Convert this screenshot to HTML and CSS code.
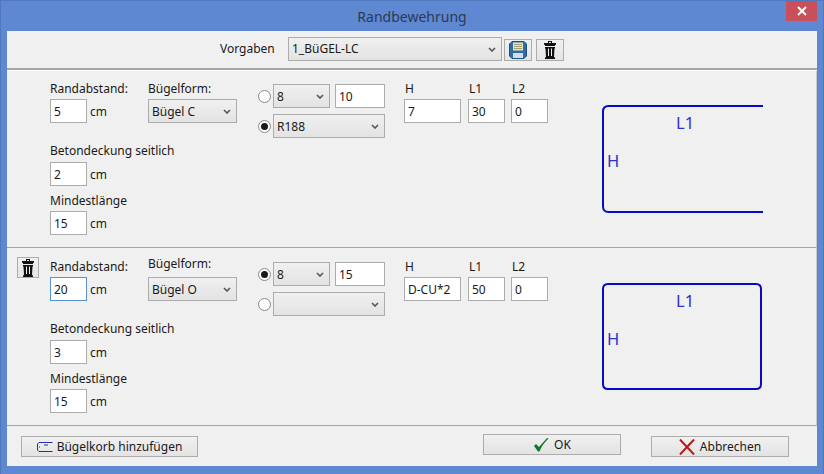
FILE: index.html
```html
<!DOCTYPE html>
<html lang="de">
<head>
<meta charset="utf-8">
<title>Randbewehrung</title>
<link rel="stylesheet" href="styles.css">
</head>
<body>
<svg class="defs" width="0" height="0" aria-hidden="true">
  <symbol id="trash" viewBox="0 0 14 18">
    <path d="M5 0h4v2h4v1.500l-1 .5v1H2V4L1 3.500V2h4zM6 1v1h2V1z" fill="#111" fill-rule="evenodd"/>
    <path d="M2 6h10v1.500h-.5L11 16l1 .5V18H2v-1.500l1-.5-.5-8.500H2z" fill="#111"/>
    <path d="M5.500 7.500v7.500M8.500 7.500v7.500" stroke="#f0f0f0" stroke-width="1" fill="none"/>
  </symbol>
</svg>
<div class="window">
  <header class="titlebar">
    <span class="title">Randbewehrung</span>
    <span class="close"><svg width="10" height="10" viewBox="0 0 10 10"><path d="M1 1l8 8M9 1l-8 8" stroke="#fff" stroke-width="2"/></svg></span>
  </header>
  <main class="content">
    <div class="presets">
      <span class="presets-label">Vorgaben</span>
      <div class="select select-preset">1_BüGEL-LC<svg class="chev" viewBox="0 0 8 5"><path d="M1 1l3 3 3-3" fill="none" stroke="#555" stroke-width="1.600"/></svg></div>
      <button class="btn-icon btn-save" type="button">
        <svg width="18" height="18" viewBox="0 0 18 18">
          <path d="M3 .5h12L17.500 3v12L15 17.500H3L.5 15V3z" fill="#2e6da8" stroke="#1d4f85"/>
          <rect x="4" y="1.500" width="10" height="8" fill="#e9e6ad"/>
          <path d="M5 3.500h8M5 5.500h8M5 7.500h8" stroke="#8f8f60" stroke-width=".8"/>
          <rect x="4" y="12" width="10" height="5" fill="#cfdff0"/>
        </svg>
      </button>
      <button class="btn-icon btn-del" type="button"><svg width="14" height="18"><use href="#trash"/></svg></button>
    </div>

    <section class="rebar">
      <div class="slot"></div>
      <div class="col-main">
        <label class="lbl">Randabstand:</label>
        <div class="with-unit"><div class="input small">5</div><span>cm</span></div>
        <label class="lbl lbl-second">Betondeckung seitlich</label>
        <div class="with-unit"><div class="input small">2</div><span>cm</span></div>
        <label class="lbl lbl-third">Mindestlänge</label>
        <div class="with-unit"><div class="input small">15</div><span>cm</span></div>
      </div>
      <div class="col-shape">
        <label class="lbl">Bügelform:</label>
        <div class="select select-shape">Bügel C<svg class="chev" viewBox="0 0 8 5"><path d="M1 1l3 3 3-3" fill="none" stroke="#555" stroke-width="1.600"/></svg></div>
      </div>
      <div class="col-bars">
        <div class="bar-row">
          <span class="radio"></span>
          <div class="select select-dia">8<svg class="chev" viewBox="0 0 8 5"><path d="M1 1l3 3 3-3" fill="none" stroke="#555" stroke-width="1.600"/></svg></div>
          <div class="input spacing">10</div>
        </div>
        <div class="bar-row">
          <span class="radio on"></span>
          <div class="select select-mesh">R188<svg class="chev" viewBox="0 0 8 5"><path d="M1 1l3 3 3-3" fill="none" stroke="#555" stroke-width="1.600"/></svg></div>
        </div>
      </div>
      <div class="col-dims">
        <div class="dim dim-first"><label class="lbl">H</label><div class="input dim-h">7</div></div>
        <div class="dim"><label class="lbl">L1</label><div class="input dim-l">30</div></div>
        <div class="dim"><label class="lbl">L2</label><div class="input dim-l">0</div></div>
      </div>
      <svg class="sketch" width="164" height="112" viewBox="0 0 164 112">
        <path class="wire" d="M162 4H7.500Q2 4 2 9.500V104.500Q2 110 7.500 110H162"/>
        <text class="sk" x="75" y="26.500">L1</text>
        <text class="sk" x="6" y="64.500">H</text>
      </svg>
    </section>

    <section class="rebar rebar-last">
      <div class="slot"><button class="btn-icon btn-row-del" type="button"><svg width="14" height="18"><use href="#trash"/></svg></button></div>
      <div class="col-main">
        <label class="lbl">Randabstand:</label>
        <div class="with-unit"><div class="input small focus">20</div><span>cm</span></div>
        <label class="lbl lbl-second">Betondeckung seitlich</label>
        <div class="with-unit"><div class="input small">3</div><span>cm</span></div>
        <label class="lbl lbl-third">Mindestlänge</label>
        <div class="with-unit"><div class="input small">15</div><span>cm</span></div>
      </div>
      <div class="col-shape col-shape-raised">
        <label class="lbl">Bügelform:</label>
        <div class="select select-shape">Bügel O<svg class="chev" viewBox="0 0 8 5"><path d="M1 1l3 3 3-3" fill="none" stroke="#555" stroke-width="1.600"/></svg></div>
      </div>
      <div class="col-bars">
        <div class="bar-row">
          <span class="radio on"></span>
          <div class="select select-dia">8<svg class="chev" viewBox="0 0 8 5"><path d="M1 1l3 3 3-3" fill="none" stroke="#555" stroke-width="1.600"/></svg></div>
          <div class="input spacing">15</div>
        </div>
        <div class="bar-row">
          <span class="radio"></span>
          <div class="select select-mesh"><svg class="chev" viewBox="0 0 8 5"><path d="M1 1l3 3 3-3" fill="none" stroke="#555" stroke-width="1.600"/></svg></div>
        </div>
      </div>
      <div class="col-dims">
        <div class="dim dim-first"><label class="lbl">H</label><div class="input dim-h">D-CU*2</div></div>
        <div class="dim"><label class="lbl">L1</label><div class="input dim-l">50</div></div>
        <div class="dim"><label class="lbl">L2</label><div class="input dim-l">0</div></div>
      </div>
      <svg class="sketch" width="164" height="112" viewBox="0 0 164 112">
        <path class="wire" d="M7 4H155Q160 4 160 9V104Q160 109 155 109H7Q2 109 2 104V9Q2 4 7 4Z"/>
        <text class="sk" x="75" y="26.500">L1</text>
        <text class="sk" x="6" y="64.500">H</text>
      </svg>
    </section>

    <footer class="actions">
      <button class="btn btn-add" type="button">
        <svg width="16" height="10" viewBox="0 0 16 10"><path d="M15.500 .5H2L.5 2V8L2 9.500H15.500" fill="none" stroke="#2a2aa8"/><path d="M2 5h1M7 3h4" stroke="#2a2aa8"/></svg>
        Bügelkorb hinzufügen
      </button>
      <button class="btn btn-ok" type="button">
        <svg width="16" height="14" viewBox="0 0 16 14"><path d="M1 8l2-2 3 3 8-9 1.500 .5C11 5 8 9 6.500 13.500H5z" fill="#0f7a25"/></svg>
        OK
      </button>
      <button class="btn btn-cancel" type="button">
        <svg width="16" height="16" viewBox="0 0 16 16"><path d="M1 .5L15 15.500M15 .5L1 15.500" stroke="#b81818" stroke-width="2"/></svg>
        Abbrechen
      </button>
    </footer>
  </main>
</div>
</body>
</html>
```

FILE: styles.css
```css
* { box-sizing: border-box; }
html, body { margin: 0; padding: 0; }
body {
  width: 824px;
  height: 474px;
  overflow: hidden;
  font-family: "Noto Sans", sans-serif;
  font-size: 12px;
  color: #1a1a1a;
  background: #5f88d3;
}
.defs { position: absolute; }
.window {
  width: 824px;
  height: 474px;
  display: flex;
  flex-direction: column;
  border: 1px solid #4f78bd;
  border-bottom: 0;
}
.titlebar {
  position: relative;
  height: 30px;
  flex: none;
  display: flex;
  align-items: center;
  justify-content: center;
}
.title { font-size: 14px; color: #2c3a50; }
.close {
  position: absolute;
  right: 6px;
  top: 0;
  width: 31px;
  height: 20px;
  background: #c9505a;
  display: flex;
  align-items: center;
  justify-content: center;
}
.content {
  width: 810px;
  height: 435px;
  margin-left: 6px;
  background: #f0f0f0;
  display: flex;
  flex-direction: column;
}
.presets {
  height: 39px;
  flex: none;
  display: flex;
  align-items: center;
  padding: 0 0 2px 213px;
  border-bottom: 2px solid #a5a5a5;
  box-shadow: 0 1px 0 #fff;
  position: relative;
}
.presets-label { width: 68px; }
.select {
  position: relative;
  height: 24px;
  display: flex;
  align-items: center;
  padding-left: 3px;
  border: 1px solid #acacac;
  background: linear-gradient(#f0f0f0, #e3e3e3);
}
.chev { position: absolute; right: 5px; top: 9px; width: 8px; height: 5px; }
.select-preset { width: 214px; }
.select-shape { width: 89px; }
.select-dia { width: 57px; }
.select-mesh { width: 112px; }
.btn-icon {
  padding: 0;
  border: 1px solid #acacac;
  background: linear-gradient(#f0f0f0, #e5e5e5);
  display: flex;
  align-items: center;
  justify-content: center;
}
.btn-save { width: 28px; height: 22px; margin: 2px 0 0 2px; }
.btn-del { width: 28px; height: 22px; margin: 2px 0 0 4px; }
.rebar {
  height: 178px;
  flex: none;
  display: flex;
  align-items: flex-start;
  border-bottom: 1px solid #a5a5a5;
  border-right: 1px solid #c8c8c8;
}
.slot { width: 43px; flex: none; padding: 9px 0 0 10px; }
.btn-row-del { width: 22px; height: 21px; }
.col-main { width: 98px; flex: none; padding-top: 11px; }
.lbl { display: block; height: 14px; line-height: 16px; white-space: nowrap; }
.lbl-second { margin-top: 20px; }
.lbl-third { margin-top: 7px; }
.with-unit { display: flex; align-items: center; gap: 3px; margin-top: 4px; }
.lbl-second + .with-unit { margin-top: 5px; }
.input {
  height: 24px;
  display: flex;
  align-items: center;
  padding-left: 3px;
  background: #fff;
  border: 1px solid #acacac;
}
.small { width: 37px; flex: none; }
.focus { border-color: #5b93d0; }
.col-shape { width: 110px; flex: none; padding-top: 11px; }
.col-shape-raised { padding-top: 8px; }
.col-shape .select { margin-top: 4px; }
.col-shape-raised .select { margin-top: 7px; }
.col-bars {
  width: 146px;
  flex: none;
  padding-top: 14px;
  display: flex;
  flex-direction: column;
  gap: 6px;
}
.bar-row { display: flex; align-items: center; }
.radio {
  width: 13px;
  height: 13px;
  flex: none;
  margin-right: 2px;
  border: 1px solid #8a8a8a;
  border-radius: 50%;
  background: #fff;
  display: flex;
  align-items: center;
  justify-content: center;
}
.radio.on::after {
  content: "";
  width: 7px;
  height: 7px;
  border-radius: 50%;
  background: #1a1a1a;
}
.spacing { width: 50px; margin-left: 5px; }
.col-dims {
  display: flex;
  gap: 6px;
  flex: none;
  padding-top: 11px;
}
.dim-first { margin-right: 1px; }
.dim .lbl { padding-left: 1px; }
.dim .input { margin-top: 4px; }
.dim-h { width: 57px; }
.dim-l { width: 37px; }
.sketch { flex: none; margin: 32px 0 0 53px; }
.wire { fill: none; stroke: #0a0ac4; stroke-width: 2; }
.sk { font-size: 16.500px; fill: #2f2fd0; font-family: "Noto Sans", sans-serif; }
.actions {
  flex: 1;
  display: flex;
  align-items: flex-start;
  padding: 10px 0 0 14px;
}
.btn {
  height: 21px;
  padding: 0;
  display: flex;
  align-items: center;
  justify-content: center;
  gap: 5px;
  font: inherit;
  color: inherit;
  border: 1px solid #acacac;
  background: linear-gradient(#f0f0f0, #e3e3e3);
}
.btn-add { width: 177px; gap: 4px; }
.btn-ok { width: 138px; margin: -2px 0 0 285px; }
.btn-cancel { width: 138px; margin-left: 30px; }
```
